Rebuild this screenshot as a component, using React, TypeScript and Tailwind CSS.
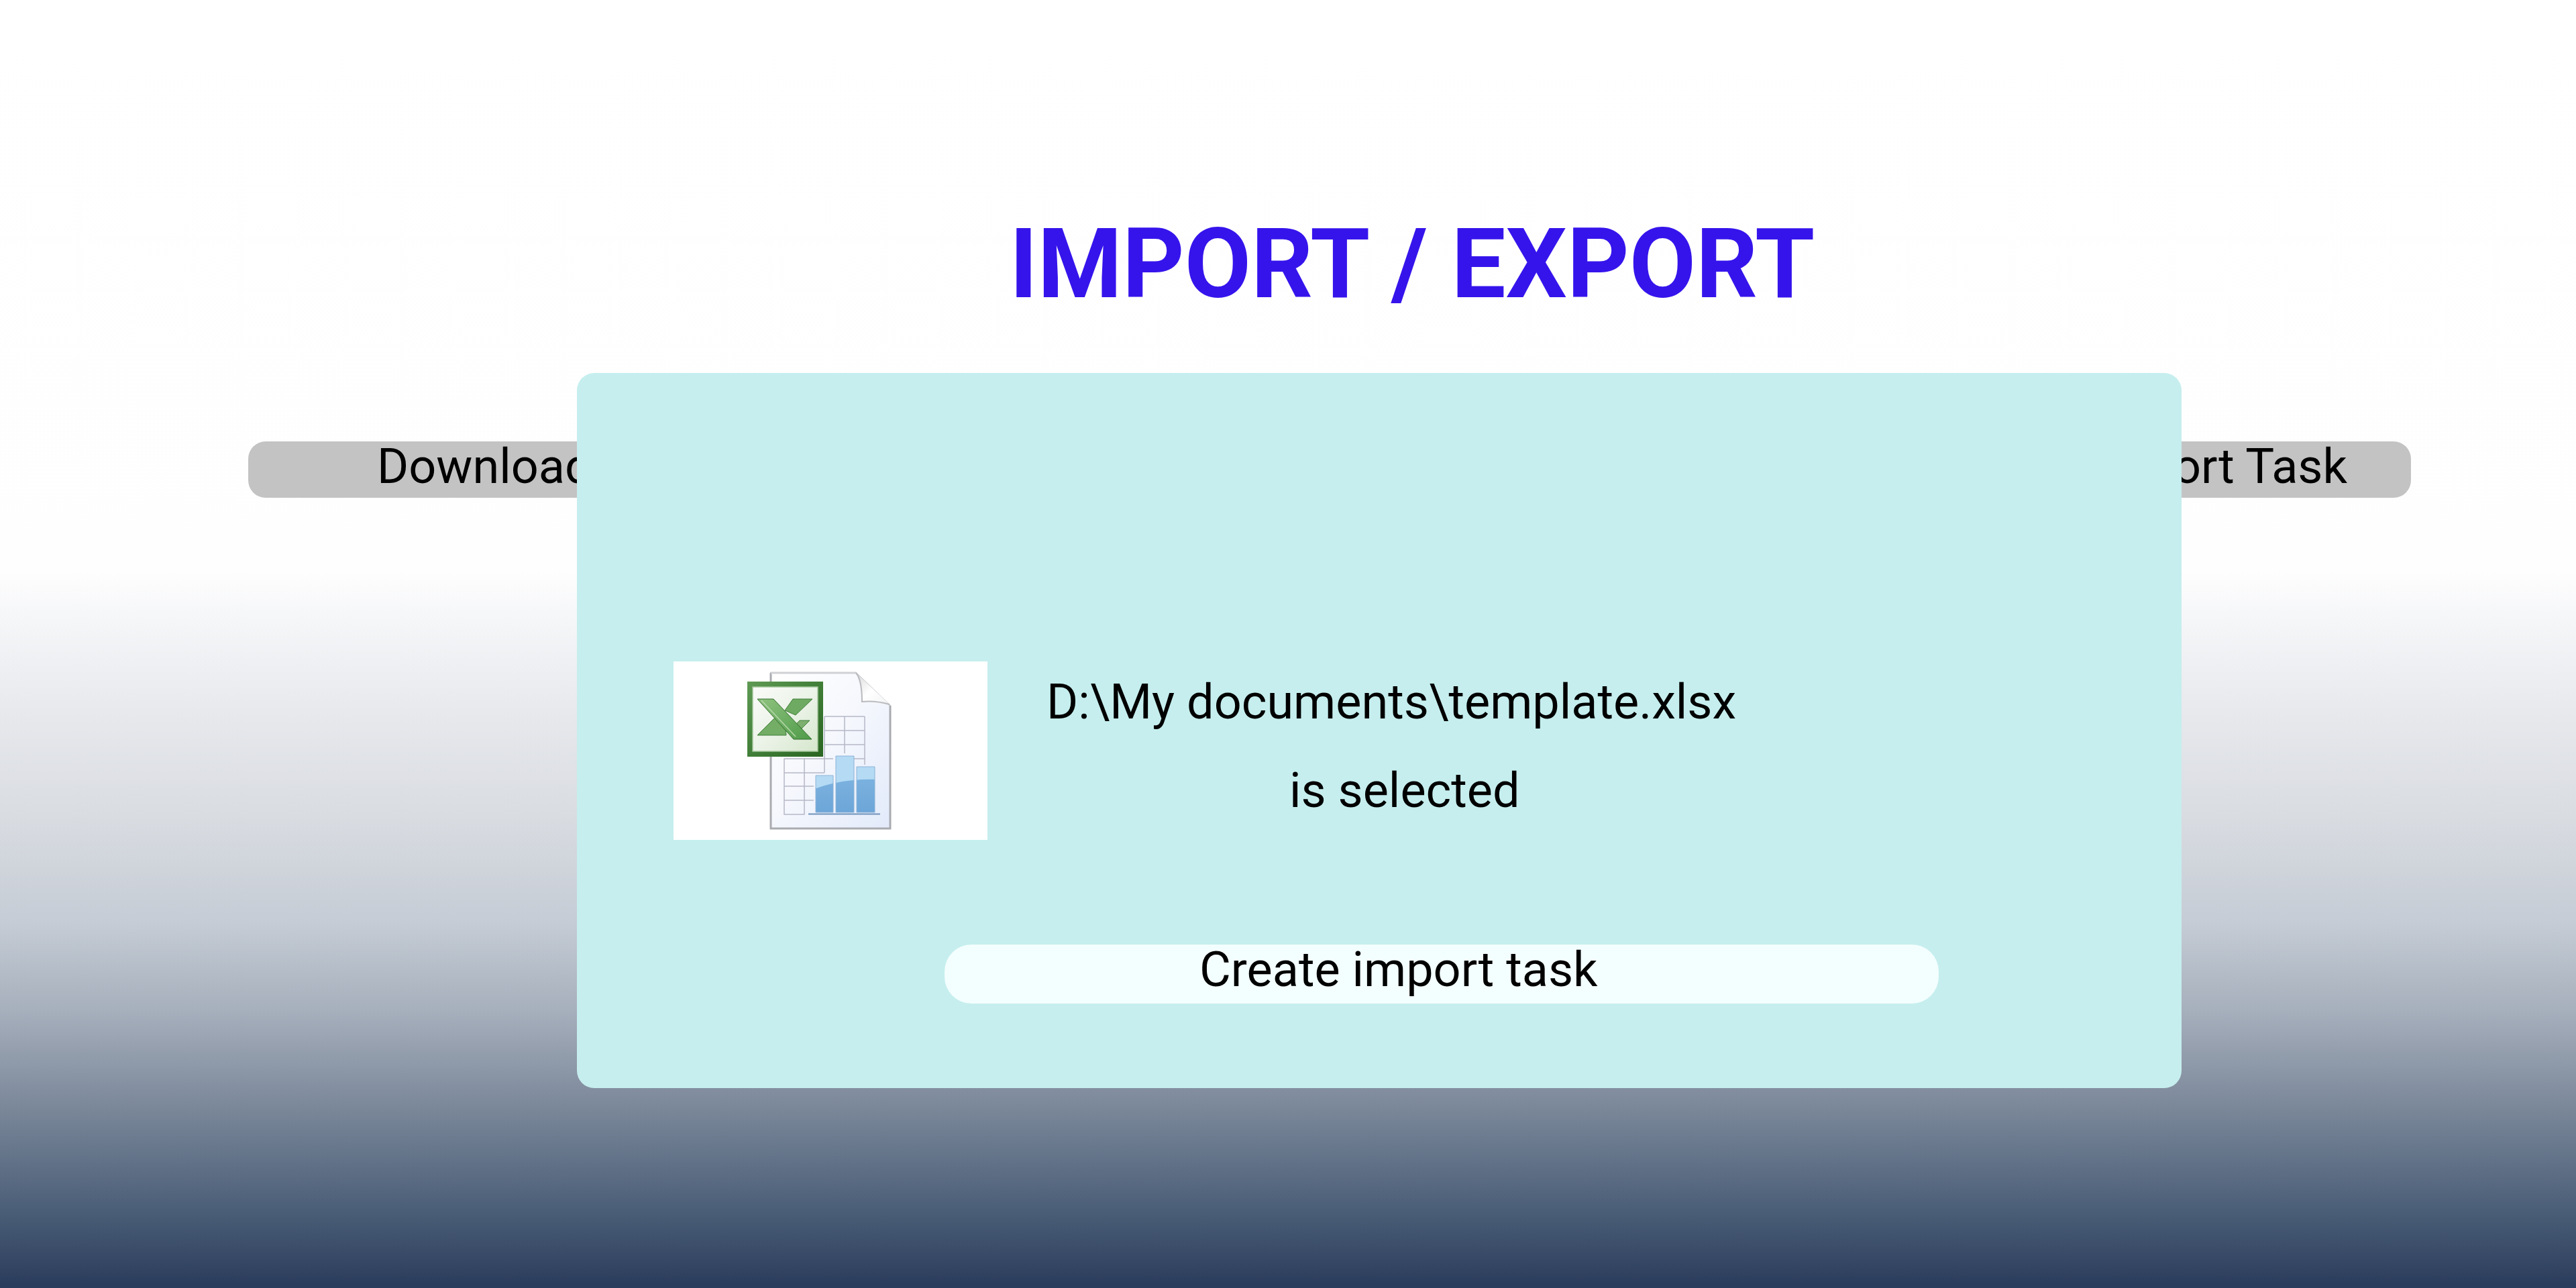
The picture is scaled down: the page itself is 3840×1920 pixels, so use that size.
function ExcelIcon() {
  return (
    <svg width="468" height="266" viewBox="0 0 468 266">
      <defs>
        <linearGradient id="page" x1="0" y1="0" x2="1" y2="1">
          <stop offset="0" stopColor="#ffffff" />
          <stop offset="0.45" stopColor="#f6f8fd" />
          <stop offset="1" stopColor="#e2eafa" />
        </linearGradient>
        <linearGradient id="fold" x1="0" y1="0" x2="1" y2="1">
          <stop offset="0" stopColor="#d8d8da" />
          <stop offset="0.5" stopColor="#ffffff" />
          <stop offset="1" stopColor="#f2f3f5" />
        </linearGradient>
        <linearGradient id="frame" x1="0" y1="0" x2="1" y2="1">
          <stop offset="0" stopColor="#5f9a54" />
          <stop offset="0.5" stopColor="#417f38" />
          <stop offset="1" stopColor="#2a6522" />
        </linearGradient>
        <linearGradient id="box" x1="0" y1="0" x2="1" y2="1">
          <stop offset="0" stopColor="#fafbf9" />
          <stop offset="0.55" stopColor="#eaf2e6" />
          <stop offset="1" stopColor="#d5e7cc" />
        </linearGradient>
        <linearGradient id="bar" x1="0" y1="0" x2="0" y2="1">
          <stop offset="0" stopColor="#86bbe5" />
          <stop offset="1" stopColor="#6ba4d7" />
        </linearGradient>
        <linearGradient id="x" x1="0" y1="0" x2="1" y2="1">
          <stop offset="0" stopColor="#8fc27f" />
          <stop offset="1" stopColor="#4f9c49" />
        </linearGradient>
        <clipPath id="bars">
          <path d="M212 170h26v55h-26zM242 141h27v84h-27zM273 157h27v68h-27z" />
        </clipPath>
      </defs>

      {/* page */}
      <path d="M145 17H272L323 66V249H145Z" fill="url(#page)" stroke="#c6c7cb" strokeWidth="2" />
      <path d="M145 17V249H323V66" fill="none" stroke="#a9abb0" strokeWidth="3" />
      <path d="M145 17H272" fill="none" stroke="#d0d1d4" strokeWidth="3" />
      <path d="M272 17Q281 28 281 60L322 64Z" fill="url(#fold)" />
      <path d="M272 17Q281 28 281 60Q300 58 322 64" fill="none" stroke="#b9babd" strokeWidth="2" />

      {/* sheet grid */}
      <g fill="none" stroke="#b6b8c6" strokeWidth="1.5">
        <path d="M165 145V228H195V145" />
        <path d="M165 145H238M266 145H285M165 166H225M165 186H209M165 207H209" />
        <path d="M225 82V166M255 82V137M285 82V154M225 82H285M225 103H285M225 124H285" />
      </g>

      {/* bars */}
      <g clipPath="url(#bars)">
        <rect x="205" y="135" width="100" height="95" fill="url(#bar)" />
        <path d="M205 135H305V176Q250 174 205 192Z" fill="#b4daf4" />
      </g>
      <path d="M212 170h26v55h-26zM242 141h27v84h-27zM273 157h27v68h-27z" fill="none" stroke="#8db3d6" strokeWidth="1" />
      <rect x="201" y="226.5" width="107" height="2" fill="#6f92bb" />

      {/* excel badge */}
      <rect x="110" y="30" width="113" height="112" fill="url(#frame)" />
      <rect x="118" y="38" width="97" height="96" fill="url(#box)" stroke="#a3c59a" strokeWidth="1.5" />
      <path d="M188 88H203L191 100H176Z" fill="#7db06f" stroke="#3f7f38" strokeWidth="1" />
      <path d="M125 110L152 83L167 99L168 110Z" fill="#73ad66" stroke="#3f7f38" strokeWidth="1" />
      <path d="M178 56H207L182 80L166 73Z" fill="#6faa62" stroke="#3f7f38" strokeWidth="1" />
      <path d="M125 56H149L206 116H179Z" fill="url(#x)" stroke="#356f2f" strokeWidth="1" />
      <path d="M131 58L182 112" fill="none" stroke="#b5d8aa" strokeWidth="1.5" />
    </svg>
  );
}

export default function App() {
  return (
    <div
      className="relative h-[1920px] w-[3840px] overflow-hidden bg-[linear-gradient(to_bottom,#ffffff_0px,#fefefe_850px,#f5f6f8_925px,#e6e8ec_1071px,#d9dce1_1216px,#c5ccd5_1376px,#a6afbc_1507px,#7a8799_1653px,#4d6079_1798px,#2b3d5c_1914px)] text-black"
      style={{ fontFamily: "Roboto, sans-serif" }}
    >
      <h1 className="pt-[311px] pl-[370px] text-center text-[144px] leading-[165px] font-bold text-[#3514ec]">
        IMPORT / EXPORT
      </h1>

      <div className="mt-[182px] flex justify-between pr-[246px] pl-[370px]">
        <div className="flex h-[84px] w-[1200px] items-center rounded-[26px] bg-[#c3c3c3] pb-[9px] pl-[192px] text-[72px]">
          Download template
        </div>
        <div className="flex h-[84px] w-[1200px] items-center justify-end rounded-[26px] bg-[#c3c3c3] pr-[95px] pb-[9px] text-[72px]">
          Export Task
        </div>
      </div>

      {/* dialog */}
      <div className="absolute top-[556px] left-[860px] flex h-[1066px] w-[2392px] flex-col rounded-[26px] bg-[#c6eeee]">
        <div className="mt-[430px] flex items-start pl-[144px]">
          <div className="h-[266px] w-[468px] bg-white">
            <ExcelIcon />
          </div>
          <div className="-mt-[5px] ml-[88px] text-[72px] leading-[132px]">
            <div>D:\My documents\template.xlsx</div>
            <div className="pl-[362px]">is selected</div>
          </div>
        </div>
        <div className="mt-[156px] ml-[548px] flex h-[88px] w-[1482px] items-center rounded-[40px] bg-[#f3fefe] pb-[12px] pl-[380px] text-[72px]">
          Create import task
        </div>
      </div>
    </div>
  );
}
